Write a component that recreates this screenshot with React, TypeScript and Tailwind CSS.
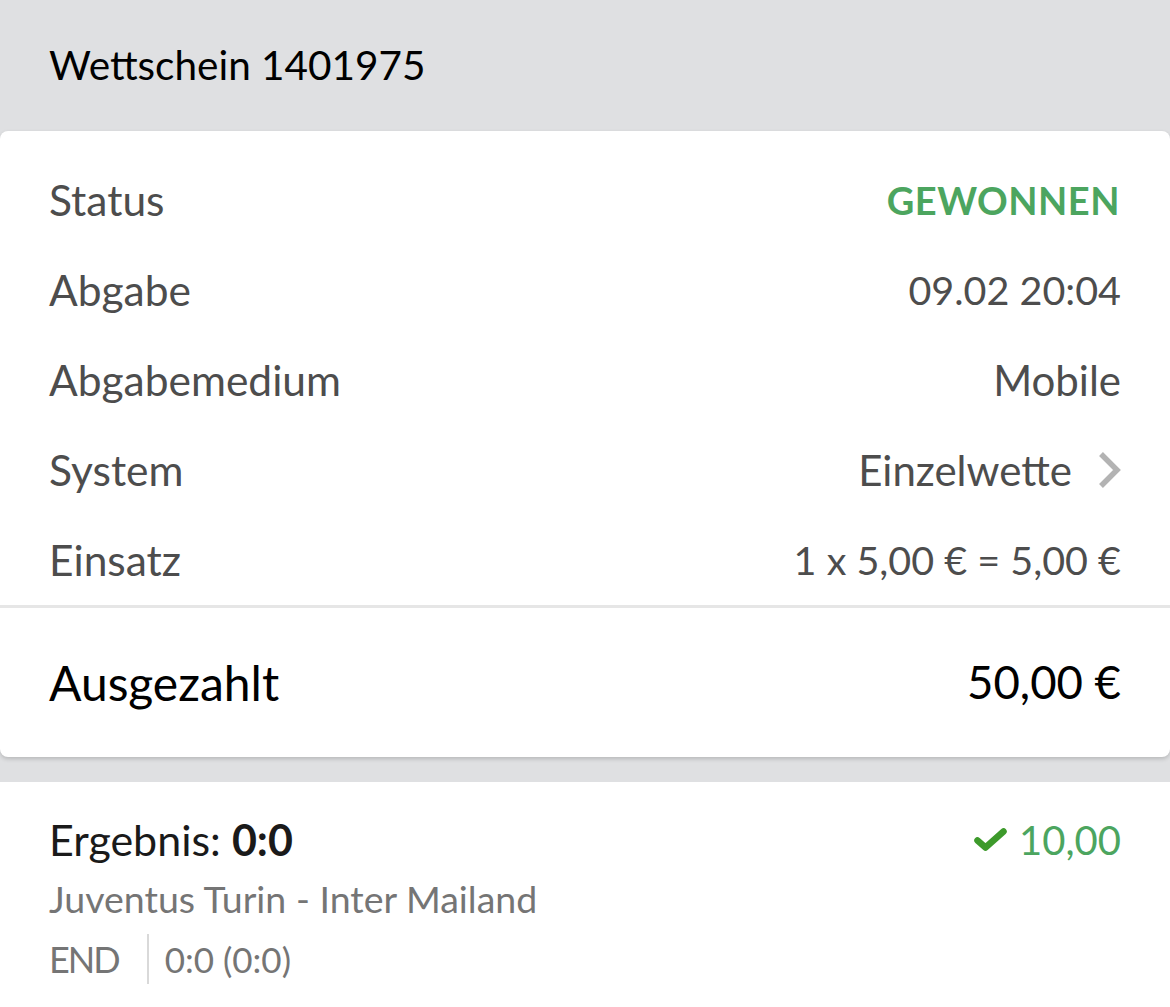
const rows: { label: string; value: string; kind?: 'status' | 'link' | 'num' }[] = [
    { label: 'Status', value: 'GEWONNEN', kind: 'status' },
    { label: 'Abgabe', value: '09.02 20:04', kind: 'num' },
    { label: 'Abgabemedium', value: 'Mobile' },
    { label: 'System', value: 'Einzelwette', kind: 'link' },
    { label: 'Einsatz', value: '1 x 5,00 € = 5,00 €', kind: 'num' },
];

export default function App() {
    return (
        <div className="min-h-screen bg-[#dfe0e2] font-['Lato','Open_Sans',sans-serif]">
            {/* Header */}
            <div className="h-[131px] px-[49px] flex items-center">
                <h1 className="text-[40.5px] text-black">Wettschein 1401975</h1>
            </div>

            {/* Karte */}
            <div className="bg-white rounded-[8px] shadow-[0_2px_4px_rgba(0,0,0,0.18)]">
                <div className="pt-[24px]">
                    {rows.map((row) => (
                        <div key={row.label} className="h-[90px] px-[49px] flex items-center justify-between text-[42px] text-[#4d4d4d]">
                            <span className="text-[42.5px]">{row.label}</span>
                            {row.kind === 'status' ? (
                                <span className="font-bold text-[38px] text-[#4ca55f] tracking-[0.5px] pr-[1px]">{row.value}</span>
                            ) : row.kind === 'link' ? (
                                <span className="flex items-center gap-[26px]">
                                    {row.value}
                                    <svg width="24" height="38" viewBox="0 0 24 38" className="-mr-[1px]">
                                        <polyline points="3,3 19,19 3,35" fill="none" stroke="#b3b3b3" strokeWidth="5.5" />
                                    </svg>
                                </span>
                            ) : row.kind === 'num' ? (
                                <span className="text-[39.5px]">{row.value}</span>
                            ) : (
                                <span>{row.value}</span>
                            )}
                        </div>
                    ))}
                </div>
                <div className="h-[3px] bg-[#e6e6e6]" />
                <div className="h-[149px] px-[49px] flex items-center justify-between text-black">
                    <span className="text-[48px]">Ausgezahlt</span>
                    <span className="text-[45.5px]">50,00 €</span>
                </div>
            </div>

            <div className="h-[25px]" />

            {/* Ergebnis */}
            <div className="bg-white px-[49px] pt-[30px] pb-[30px]">
                <div className="h-[56px] flex items-center justify-between">
                    <span className="text-[43px] text-[#1a1a1a]">
                        Ergebnis: <span className="font-bold">0:0</span>
                    </span>
                    <span className="flex items-center gap-[12px] text-[40px] text-[#4ca55f]">
                        <svg width="33" height="23" viewBox="0 0 33 23" className="mt-[-2px]">
                            <polyline points="3.5,12.5 11.5,19.5 29.5,3.5" fill="none" stroke="#3d9a2b" strokeWidth="6.5" strokeLinecap="round" strokeLinejoin="round" />
                        </svg>
                        10,00
                    </span>
                </div>
                <div className="h-[62px] flex items-center text-[37.5px] text-[#757575]">Juventus Turin - Inter Mailand</div>
                <div className="h-[58px] flex items-center text-[36px] text-[#757575]">
                    <span className="tracking-[-2px]">END</span>
                    <span className="ml-[28px] mr-[16px] w-[2px] h-[50px] bg-[#d9d9d9]" />
                    <span className="text-[35px]">0:0 (0:0)</span>
                </div>
            </div>
        </div>
    );
}
